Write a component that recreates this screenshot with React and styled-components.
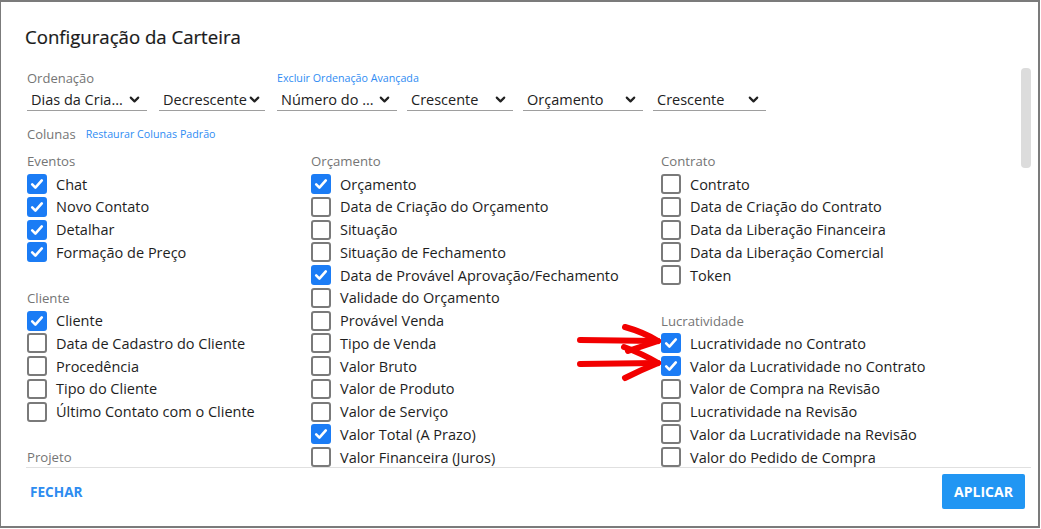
import React from "react";
import styled, { createGlobalStyle } from "styled-components";
import { ChevronDown } from "lucide-react";

const GlobalStyle = createGlobalStyle`
  html, body {
    margin: 0;
    padding: 0;
    background: #fff;
  }
  body {
    font-family: "Open Sans", "Noto Sans", sans-serif;
    color: #212121;
  }
  * {
    box-sizing: border-box;
  }
`;

const Dialog = styled.div`
  position: relative;
  display: flex;
  flex-direction: column;
  width: 1040px;
  height: 528px;
  border: 2px solid #7b7b7b;
  border-left-width: 1px;
  background: #fff;
`;

const Title = styled.h2`
  margin: 0;
  padding: 23px 24px 0;
  font-size: 18.6px;
  line-height: 24px;
  font-weight: 400;
  color: #1a1a1a;
  -webkit-text-stroke: 0.2px #1a1a1a;
`;

const Body = styled.div`
  position: relative;
  flex: 1;
  min-height: 0;
  margin: 16px 7px 0 25px;
  border-bottom: 1px solid #e0e0e0;
`;

const ScrollArea = styled.div`
  height: 100%;
  overflow: hidden;
`;

const ScrollThumb = styled.div`
  position: absolute;
  top: 3px;
  right: 0;
  width: 10px;
  height: 100px;
  border-radius: 4px;
  background: #dcdcdc;
`;

const Inner = styled.div`
  padding: 4px 0 0 1px;
`;

const SortRow = styled.div`
  display: flex;
`;

const SortGroup = styled.div`
  display: flex;
  flex-direction: column;
  margin-right: ${(p) => p.$mr || 0}px;
`;

const SortHeader = styled.div`
  height: 18px;
  display: flex;
  align-items: center;
`;

const SortSelects = styled.div`
  display: flex;
  gap: ${(p) => p.$gap}px;
  margin-top: 1px;
`;

const SectionLabel = styled.span`
  font-size: 13px;
  color: #757575;
`;

const Link = styled.a`
  font-size: 10.7px;
  color: #2f8cf3;
  cursor: pointer;
  margin-left: ${(p) => p.$ml || 0}px;
`;

const Select = styled.div`
  display: flex;
  align-items: center;
  justify-content: space-between;
  width: ${(p) => p.$w}px;
  height: 23px;
  padding: 0 5px 0 4px;
  border-bottom: 1px solid #9e9e9e;
  font-size: 14.5px;
  color: #212121;
  white-space: nowrap;
  cursor: pointer;

  svg {
    flex-shrink: 0;
  }
`;

const ColumnsHeader = styled.div`
  display: flex;
  align-items: center;
  height: 18px;
  margin-top: 14px;
`;

const ColumnsGrid = styled.div`
  display: grid;
  grid-template-columns: 284px 350px 1fr;
  margin-top: 7px;
`;

const Group = styled.div`
  margin-bottom: 22.75px;
`;

const GroupLabel = styled.div`
  display: flex;
  align-items: center;
  height: 22.75px;
  font-size: 13.2px;
  color: #757575;
`;

const Item = styled.label`
  display: flex;
  align-items: center;
  gap: 9px;
  height: 22.75px;
  font-size: 14.5px;
  color: #1e1e1e;
  white-space: nowrap;
  cursor: pointer;
`;

const Box = styled.span`
  display: flex;
  align-items: center;
  justify-content: center;
  width: 20px;
  height: 20px;
  border-radius: 3px;
  flex-shrink: 0;
  background: ${(p) => (p.$checked ? "#1b7cf5" : "#fff")};
  border: 2px solid ${(p) => (p.$checked ? "#1b7cf5" : "#7a7a7a")};
`;

const Footer = styled.div`
  display: flex;
  justify-content: space-between;
  align-items: flex-start;
  height: 58px;
  padding: 6px 13px 0 25px;
`;

const TextButton = styled.button`
  display: flex;
  align-items: center;
  height: 35px;
  padding: 0 4px;
  border: none;
  background: none;
  font-family: inherit;
  font-size: 13.6px;
  line-height: 18px;
  font-weight: 700;
  color: #2d8cf0;
  cursor: pointer;
`;

const PrimaryButton = styled.button`
  display: flex;
  align-items: center;
  justify-content: center;
  width: 83px;
  height: 35px;
  padding: 0;
  border: none;
  border-radius: 2px;
  background: #2196f3;
  font-family: inherit;
  font-size: 14px;
  line-height: 18px;
  font-weight: 700;
  color: #fff;
  cursor: pointer;
`;

const Arrows = styled.svg`
  position: absolute;
  left: 574px;
  top: 316px;
  pointer-events: none;
`;

const Check = ({ checked, label }) => (
  <Item>
    <Box $checked={checked}>
      {checked && (
        <svg width="14" height="14" viewBox="0 0 14 14">
          <path
            d="M2.2 7.4 L5.4 10.6 L11.8 3.4"
            fill="none"
            stroke="#fff"
            strokeWidth="2.6"
            strokeLinecap="round"
            strokeLinejoin="round"
          />
        </svg>
      )}
    </Box>
    {label}
  </Item>
);

const columns = [
  [
    {
      label: "Eventos",
      items: [
        ["Chat", true],
        ["Novo Contato", true],
        ["Detalhar", true],
        ["Formação de Preço", true],
      ],
    },
    {
      label: "Cliente",
      items: [
        ["Cliente", true],
        ["Data de Cadastro do Cliente", false],
        ["Procedência", false],
        ["Tipo do Cliente", false],
        ["Último Contato com o Cliente", false],
      ],
    },
    {
      label: "Projeto",
      items: [],
    },
  ],
  [
    {
      label: "Orçamento",
      items: [
        ["Orçamento", true],
        ["Data de Criação do Orçamento", false],
        ["Situação", false],
        ["Situação de Fechamento", false],
        ["Data de Provável Aprovação/Fechamento", true],
        ["Validade do Orçamento", false],
        ["Provável Venda", false],
        ["Tipo de Venda", false],
        ["Valor Bruto", false],
        ["Valor de Produto", false],
        ["Valor de Serviço", false],
        ["Valor Total (A Prazo)", true],
        ["Valor Financeira (Juros)", false],
      ],
    },
  ],
  [
    {
      label: "Contrato",
      items: [
        ["Contrato", false],
        ["Data de Criação do Contrato", false],
        ["Data da Liberação Financeira", false],
        ["Data da Liberação Comercial", false],
        ["Token", false],
      ],
    },
    {
      label: "Lucratividade",
      items: [
        ["Lucratividade no Contrato", true],
        ["Valor da Lucratividade no Contrato", true],
        ["Valor de Compra na Revisão", false],
        ["Lucratividade na Revisão", false],
        ["Valor da Lucratividade na Revisão", false],
        ["Valor do Pedido de Compra", false],
      ],
    },
  ],
];

const SelectBox = ({ width, children }) => (
  <Select $w={width}>
    <span>{children}</span>
    <ChevronDown size={15} strokeWidth={3.4} color="#222" />
  </Select>
);

export default function App() {
  return (
    <>
      <GlobalStyle />
      <Dialog>
        <Title>Configuração da Carteira</Title>
        <Body>
          <ScrollArea>
            <Inner>
              <SortRow>
                <SortGroup $mr={12}>
                  <SortHeader>
                    <SectionLabel>Ordenação</SectionLabel>
                  </SortHeader>
                  <SortSelects $gap={12}>
                    <SelectBox width={120}>Dias da Cria...</SelectBox>
                    <SelectBox width={106}>Decrescente</SelectBox>
                  </SortSelects>
                </SortGroup>
                <SortGroup $mr={10}>
                  <SortHeader>
                    <Link>Excluir Ordenação Avançada</Link>
                  </SortHeader>
                  <SortSelects $gap={10}>
                    <SelectBox width={120}>Número do ...</SelectBox>
                    <SelectBox width={106}>Crescente</SelectBox>
                  </SortSelects>
                </SortGroup>
                <SortGroup>
                  <SortHeader />
                  <SortSelects $gap={10}>
                    <SelectBox width={120}>Orçamento</SelectBox>
                    <SelectBox width={113}>Crescente</SelectBox>
                  </SortSelects>
                </SortGroup>
              </SortRow>

              <ColumnsHeader>
                <SectionLabel>Colunas</SectionLabel>
                <Link $ml={10}>Restaurar Colunas Padrão</Link>
              </ColumnsHeader>

              <ColumnsGrid>
                {columns.map((groups, ci) => (
                  <div key={ci}>
                    {groups.map((g) => (
                      <Group key={g.label}>
                        <GroupLabel>{g.label}</GroupLabel>
                        {g.items.map(([label, checked]) => (
                          <Check key={label} label={label} checked={checked} />
                        ))}
                      </Group>
                    ))}
                  </div>
                ))}
              </ColumnsGrid>
            </Inner>
          </ScrollArea>
          <ScrollThumb />
        </Body>
        <Footer>
          <TextButton>FECHAR</TextButton>
          <PrimaryButton>APLICAR</PrimaryButton>
        </Footer>

        <Arrows width="92" height="68" viewBox="0 0 92 68">
          <g
            fill="none"
            stroke="#f20000"
            strokeWidth="6"
            strokeLinecap="round"
            strokeLinejoin="round"
          >
            <path d="M5 22 L82 23" />
            <path d="M50 9 Q68 14 83 23" />
            <path d="M83 23 Q68 28 53 33" />
            <path d="M5 46 L82 45" />
            <path d="M49 29 Q68 36 83 45" />
            <path d="M83 45 Q66 52 50 60" />
          </g>
        </Arrows>
      </Dialog>
    </>
  );
}
